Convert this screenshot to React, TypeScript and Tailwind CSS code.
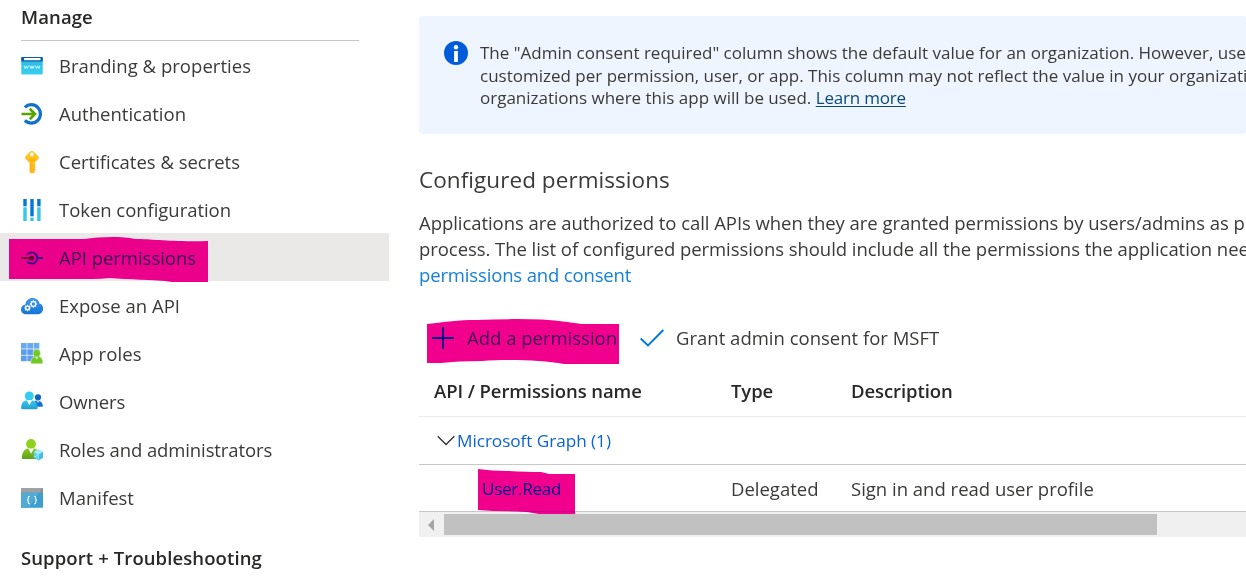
import type { ReactNode } from "react";

function Icon({ children }: { children: ReactNode }) {
  return (
    <svg width="22" height="22" viewBox="0 0 22 22" className="mt-0.5 block shrink-0">
      {children}
    </svg>
  );
}

const BrandingIcon = (
  <Icon>
    <defs>
      <linearGradient id="brand" x1="0" y1="0" x2="0" y2="1">
        <stop offset="0" stopColor="#29b6e0" />
        <stop offset="1" stopColor="#36d0f0" />
      </linearGradient>
    </defs>
    <rect x="0.3" y="2" width="21.4" height="17.5" rx="0.8" fill="url(#brand)" />
    <path d="M0.3 6.5V2.8a.8.8 0 0 1 .8-.8h19.8a.8.8 0 0 1 .8.8v3.700z" fill="#0a5ca8" />
    <rect x="3" y="3" width="16.5" height="2.3" rx="0.4" fill="#fff" />
    <path
      d="M3 10.600l1.200 3 1.100-2.700 1.100 2.700 1.200-3M8.700 10.600l1.200 3 1.100-2.700 1.100 2.700 1.200-3M14.400 10.600l1.200 3 1.100-2.700 1.100 2.700 1.200-3"
      fill="none"
      stroke="#d8f7fe"
      strokeWidth="0.9"
    />
  </Icon>
);

const AuthIcon = (
  <Icon>
    <path d="M3.800 4.300A9.200 9.200 0 1 1 3.800 17.500" fill="none" stroke="#0f72c9" strokeWidth="3.200" />
    <path d="M0.500 11h13M8.700 5.800l5.300 5.200-5.300 5.200" fill="none" stroke="#57a300" strokeWidth="2.600" />
  </Icon>
);

const KeyIcon = (
  <Icon>
    <defs>
      <linearGradient id="key" x1="0" y1="0" x2="0" y2="1">
        <stop offset="0" stopColor="#ffcb1e" />
        <stop offset="1" stopColor="#ffb41e" />
      </linearGradient>
    </defs>
    <path
      fillRule="evenodd"
      fill="url(#key)"
      d="M10.800 0c1 0 1.500.3 2.200 1l4.300 4.200c.8.8.8 2 0 2.800l-3.600 3.500v1.200l1 1-1 1.100 1 1.200-1 1.200 1 1.300-1 1.200v1.500l-2.500 2-2.700-2V11.600L4.600 8c-.8-.8-.8-2 0-2.800L8.800 1c.6-.7 1.200-1 2-1zM10.900 1.600a1.800 1.800 0 1 0 0 3.600 1.800 1.800 0 0 0 0-3.600z"
    />
    <path d="M7.400 8.400h7M7.400 10h7M10 12.500v7" stroke="#ffa400" strokeWidth="0.700" />
  </Icon>
);

const TokenIcon = (
  <Icon>
    <rect x="2.300" y="0" width="3.400" height="7.300" fill="#0078d4" />
    <rect x="2.300" y="8.300" width="3.400" height="13.700" fill="#36c6e6" />
    <rect x="9.300" y="0" width="3.400" height="17.300" fill="#0078d4" />
    <rect x="9.300" y="18.600" width="3.400" height="3.400" fill="#36c6e6" />
    <rect x="16.200" y="0" width="3.400" height="7.300" fill="#0078d4" />
    <rect x="16.200" y="8.300" width="3.400" height="13.700" fill="#36c6e6" />
  </Icon>
);

const ApiIcon = (
  <Icon>
    <path d="M6 7.800A5.600 5.600 0 1 1 6 14.200M16.500 11H22" fill="none" stroke="#3c20b0" strokeWidth="1.900" />
    <path d="M0 11h10" stroke="#6a1030" strokeWidth="1.900" />
    <circle cx="10.600" cy="11" r="2.600" fill="#6a1030" />
  </Icon>
);

const teeth = [0, 45, 90, 135, 180, 225, 270, 315];
const CloudIcon = (
  <Icon>
    <defs>
      <linearGradient id="cloud" x1="0" y1="0" x2="0" y2="1">
        <stop offset="0" stopColor="#4196ea" />
        <stop offset="1" stopColor="#1474d8" />
      </linearGradient>
    </defs>
    <path
      d="M5.400 19.300C2.200 19.300 0 17.200 0 14.400c0-2.600 1.900-4.600 4.400-4.900C4.800 5.500 7.800 3 11.500 3c3.500 0 6.300 2.200 7 5.400 2.200.4 3.600 2.600 3.600 5.200 0 3.300-2.300 5.700-5.400 5.700z"
      fill="url(#cloud)"
    />
    {[
      { x: 6.5, y: 13, r: 1.8 },
      { x: 12.4, y: 9, r: 2.3 },
    ].map((g) => (
      <g key={g.x} transform={`translate(${g.x} ${g.y})`}>
        <circle r={g.r} fill="none" stroke="#fff" strokeWidth="1.300" />
        {teeth.map((a) => (
          <path key={a} d={`M0 ${-g.r}v-1.400`} transform={`rotate(${a})`} stroke="#fff" strokeWidth="1.200" />
        ))}
      </g>
    ))}
  </Icon>
);

const RolesIcon = (
  <Icon>
    {[0, 6.3, 12.6].map((y) =>
      [0, 6.3, 12.6].map((x) => (
        <rect key={`${x}-${y}`} x={x} y={y} width="5.700" height="5.600" fill={y > 5 ? "#5b9cec" : "#69a8f2"} />
      )),
    )}
    <path
      d="M15.700 6.300a3.800 3.800 0 0 1 2.100 7c2.600.8 3.800 2.600 4.100 5.700.1.900-.4 1.800-1.500 1.800h-9.200c-1.100 0-1.700-.8-1.500-1.800.4-3.200 1.600-5 4-5.700a3.800 3.800 0 0 1 2-7z"
      fill="#73c928"
      stroke="#eef8e6"
      strokeWidth="0.500"
    />
    <path d="M14 13.800l1.700 2.800 1.700-2.800z" fill="#e4f6d5" />
  </Icon>
);

const OwnersIcon = (
  <Icon>
    <defs>
      <linearGradient id="own" x1="0" y1="0" x2="0" y2="1">
        <stop offset="0" stopColor="#34c8ee" />
        <stop offset="1" stopColor="#249fce" />
      </linearGradient>
    </defs>
    <circle cx="17" cy="6.300" r="3.100" fill="#0b63c4" />
    <path d="M13.500 9.900c5.200-1 8.300 1.200 8.300 5 0 .6-.3.900-.9.900h-6z" fill="#1173d4" />
    <path d="M16 10l1 2 1-2z" fill="#fff" />
    <circle cx="8.300" cy="5" r="4.500" fill="#34cdf2" />
    <path d="M4.700 9.500h7.300c3 .8 4.500 3.500 4.600 7.200 0 1-.5 1.500-1.400 1.500H1.500c-1 0-1.500-.6-1.400-1.600.2-3.900 1.700-6.400 4.600-7.100z" fill="url(#own)" />
    <path d="M5.700 9.200l2.700 5 2.700-5z" fill="#fff" />
  </Icon>
);

const AdminIcon = (
  <Icon>
    <defs>
      <linearGradient id="adm" x1="0" y1="0" x2="0" y2="1">
        <stop offset="0" stopColor="#86cc1f" />
        <stop offset="1" stopColor="#5e9f18" />
      </linearGradient>
    </defs>
    <circle cx="10" cy="5" r="4.900" fill="#90d01f" />
    <path d="M6.300 9.500h7.500c3 1 4.500 4 4.800 9 0 1-.5 1.500-1.500 1.500H2.300c-1 0-1.600-.6-1.500-1.600.5-4.900 2.200-8 5.500-8.900z" fill="url(#adm)" />
    <path d="M7.300 9.600l2.800 5.200 2.800-5.200z" fill="#fff" />
    <path d="M17.400 10.300l4.700 2.700v5.600l-4.700 2.800-4.700-2.800V13z" fill="#5cd0ee" />
    <path d="M17.400 10.300l4.700 2.700-4.700 2.700-4.700-2.700z" fill="#a5ecfb" />
    <path d="M17.400 15.700l4.700-2.700v5.600l-4.700 2.800z" fill="#45bfe4" />
    <path d="M17.400 15.700v5.700M17.400 15.700l-4.700 2.700" stroke="#b5f1fc" strokeWidth="0.700" />
  </Icon>
);

const ManifestIcon = (
  <Icon>
    <rect x="0" y="1.300" width="22" height="19.400" rx="0.500" fill="#3c9fd0" />
    <path d="M0 5.500h18L8 20.700H0z" fill="#52abd6" />
    <path d="M0 5.500V1.800a.5.500 0 0 1 .5-.5h21a.5.500 0 0 1 .5.500v3.700z" fill="#a0a0a0" />
    <path d="M18.500 5.500L21 1.300h1v4.200z" fill="#8f8f8f" />
    <path
      d="M8.800 9.300c-1.300 0-1.500.6-1.500 1.600s0 2-1.100 2.200c1.100.2 1.100 1.200 1.100 2.200s.2 1.600 1.500 1.600M13.200 9.300c1.300 0 1.500.6 1.500 1.600s0 2 1.100 2.200c-1.100.2-1.100 1.200-1.100 2.200s-.2 1.600-1.500 1.600"
      fill="none"
      stroke="#fff"
      strokeWidth="1.100"
    />
  </Icon>
);

const navItems = [
  { icon: BrandingIcon, label: "Branding & properties", spacing: "tracking-[0.03px]" },
  { icon: AuthIcon, label: "Authentication", spacing: "tracking-[0.01px]" },
  { icon: KeyIcon, label: "Certificates & secrets", spacing: "tracking-[-0.01px]" },
  { icon: TokenIcon, label: "Token configuration", spacing: "tracking-[-0.04px]" },
  { icon: ApiIcon, label: "API permissions", spacing: "tracking-[-0.03px]", active: true },
  { icon: CloudIcon, label: "Expose an API", spacing: "tracking-[0.01px]" },
  { icon: RolesIcon, label: "App roles", spacing: "tracking-[0.1px]" },
  { icon: OwnersIcon, label: "Owners", spacing: "tracking-[-0.1px]" },
  { icon: AdminIcon, label: "Roles and administrators", spacing: "tracking-[-0.11px]" },
  { icon: ManifestIcon, label: "Manifest", spacing: "tracking-[0px]" },
];

function Highlight({ className, width, height, d }: { className: string; width: number; height: number; d: string }) {
  return (
    <svg
      width={width}
      height={height}
      viewBox={`0 0 ${width} ${height}`}
      className={`pointer-events-none absolute mix-blend-darken ${className}`}
    >
      <path d={d} fill="#f0008c" />
    </svg>
  );
}

function Sidebar() {
  return (
    <nav className="w-[389px] shrink-0">
      <div className="mr-[30px] ml-[21px] h-[41px] border-b border-[#c8c6c4] pt-1 text-[18.5px] leading-[26px] font-semibold tracking-[0.12px] text-[#292827]">
        Manage
      </div>
      <ul>
        {navItems.map((item) => (
          <li
            key={item.label}
            className={`relative flex h-12 items-center gap-4 pl-[21px] ${item.active ? "bg-[#ebe9e8]" : ""}`}
          >
            {item.icon}
            <span className={`pt-px leading-[26px] whitespace-nowrap ${item.spacing}`}>{item.label}</span>
            {item.active && (
              <Highlight
                className="top-[3px] left-[9px]"
                width={200}
                height={46}
                d="M0 3H75C90 1 112 0 126 3C145 3 160 6 199 5V46H163C145 43 118 44 101 42Q92 43 84 43H0z"
              />
            )}
          </li>
        ))}
      </ul>
      <div className="pt-6 pl-[21px] text-[18.5px] leading-[26px] font-semibold tracking-[0.1px] whitespace-nowrap text-[#292827]">
        Support + Troubleshooting
      </div>
    </nav>
  );
}

function Banner() {
  return (
    <section className="mt-4 flex h-[118px] rounded-[3px] bg-[#eff5fe] pt-[25px] pl-[25px]">
      <svg width="24" height="24" viewBox="0 0 24 24" className="block shrink-0">
        <circle cx="12" cy="12" r="12" fill="#015cda" />
        <circle cx="12" cy="6.200" r="2.200" fill="#fff" />
        <path d="M10.100 10h3.800v11h-3.800z" fill="#fff" />
      </svg>
      <p className="mt-px ml-3 text-[17px] leading-[22.6px] whitespace-nowrap">
        The "Admin consent required" column shows the default value for an organization. However, use
        <br />
        customized per permission, user, or app. This column may not reflect the value in your organizati
        <br />
        organizations where this app will be used.{" "}
        <a className="tracking-[-0.2px] text-[#0b4a7d] underline underline-offset-2">Learn more</a>
      </p>
    </section>
  );
}

function Toolbar() {
  return (
    <div className="mb-px flex h-[53px] items-center">
      <div className="relative flex items-center pl-[13px]">
        <svg width="22" height="22" viewBox="0 0 22 22">
          <path d="M11 0v22M0 11h22" stroke="#015cda" strokeWidth="1.800" />
        </svg>
        <span className="ml-[13px] leading-[26px]">Add a permission</span>
        <Highlight
          className="top-[-7px] left-2"
          width={192}
          height={46}
          d="M0 6C20 4 30 2 50 2C80 1 110 0 140 4L155 6H192V46H137C115 42 80 41 55 43Q30 43 14 45H0z"
        />
      </div>
      <svg width="24" height="18" viewBox="0 0 24 18" className="ml-[23px]">
        <path d="M.7 9.500l7.300 7L23.300 1" fill="none" stroke="#0078d4" strokeWidth="1.900" />
      </svg>
      <span className="ml-3 leading-[26px]">Grant admin consent for MSFT</span>
    </div>
  );
}

function PermissionsTable() {
  return (
    <div>
      <div className="grid h-[52px] grid-cols-[297px_120px_1fr] items-center border-b border-[#edebe9] pl-[15px] font-semibold tracking-[-0.09px] text-[#292827]">
        <span>API / Permissions name</span>
        <span>Type</span>
        <span>Description</span>
      </div>
      <div className="flex h-12 items-center border-b border-[#c8c8c8] pl-[18px] text-[17.2px]">
        <svg width="18" height="12" viewBox="0 0 18 12">
          <path d="M.7 1.200L9 9.500l8.300-8.300" fill="none" stroke="#323130" strokeWidth="1.300" />
        </svg>
        <span className="ml-0.5 tracking-[-0.05px] text-[#0a63d8]">Microsoft Graph (1)</span>
      </div>
      <div className="grid h-[47px] grid-cols-[249px_120px_1fr] items-center border-b border-[#c8c8c8] pt-0.5 pl-[63px]">
        <div className="relative text-[17.2px] tracking-[-0.35px] text-[#015cda]">
          User.Read
          <Highlight
            className="top-[-7px] left-[-5px]"
            width={98}
            height={46}
            d="M1 0C10 1 20 2 32 2Q50 3 64 3L72 5H98V45H62L50 43Q30 42 16 42L1 41z"
          />
        </div>
        <span>Delegated</span>
        <span>Sign in and read user profile</span>
      </div>
      <div className="flex h-[25px] items-center bg-[#f0f0f0]">
        <svg width="25" height="12" viewBox="0 0 25 12">
          <path d="M15 0v12L9 6z" fill="#a3a3a3" />
        </svg>
        <div className="h-[21px] w-[713px] bg-[#c1c1c1]" />
      </div>
    </div>
  );
}

export default function App() {
  return (
    <div className="flex h-[577px] w-[1246px] overflow-hidden bg-white font-['Open_Sans',sans-serif] text-[18.5px] text-[#3b3a39]">
      <Sidebar />
      <main className="ml-[30px] w-[827px] shrink-0 overflow-hidden">
        <Banner />
        <h2 className="mt-[30px] text-[22.5px] leading-8 tracking-[0.06px]">Configured permissions</h2>
        <p className="mt-3.5 leading-[26px] tracking-[-0.055px] whitespace-nowrap">
          Applications are authorized to call APIs when they are granted permissions by users/admins as p
          <br />
          process. The list of configured permissions should include all the permissions the application nee
          <br />
          <a className="tracking-[-0.15px] text-[#1481da]">permissions and consent</a>
        </p>
        <div className="h-[23px]" />
        <Toolbar />
        <PermissionsTable />
      </main>
    </div>
  );
}
